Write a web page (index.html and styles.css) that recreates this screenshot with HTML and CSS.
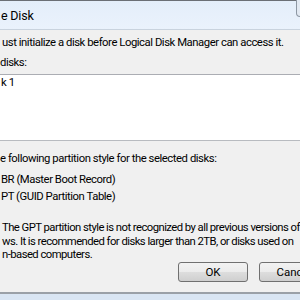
FILE: index.html
```html
<!DOCTYPE html>
<html lang="en">
<head>
  <meta charset="UTF-8" />
  <title>Initialize Disk</title>
  <link rel="stylesheet" href="styles.css">
</head>
<body>

<div class="window">
  <!-- Title bar -->
  <div class="titlebar">
    <span class="title">e Disk</span>
    <div class="close-btn"></div>
  </div>

  <!-- Dialog body -->
  <div class="dialog">
    <p class="intro">ust initialize a disk before Logical Disk Manager can access it.</p>
    <p class="label">disks:</p>
    <div class="listbox">
      <div class="list-item">k 1</div>
    </div>

    <p class="label style-label">e following partition style for the selected disks:</p>
    <div class="option first">BR (Master Boot Record)</div>
    <div class="option">PT (GUID Partition Table)</div>

    <p class="note">The GPT partition style is not recognized by all previous versions of<br>ws. It is recommended for disks larger than 2TB, or disks used on<br>n-based computers.</p>

    <div class="buttons">
      <button class="btn">OK</button>
      <button class="btn">Cancel</button>
    </div>
  </div>

  <div class="frame-bottom"></div>
</div>

</body>
</html>
```

FILE: styles.css
```css
body {
  margin: 0;
  width: 300px;
  height: 300px;
  overflow: hidden;
  font-family: Roboto, "Liberation Sans", sans-serif;
  font-size: 11.3px;
  letter-spacing: -0.45px;
  color: #000;
  background: #f0f0f0;
}

.window {
  display: flex;
  flex-direction: column;
  height: 300px;
  white-space: nowrap;
}

.titlebar {
  position: relative;
  height: 28px;
  border-top: 1px solid #6b6f75;
  border-bottom: 1px solid #c9d3de;
  background: linear-gradient(#e4eefa, #eaf2fc);
  display: flex;
  align-items: center;
  flex: none;
}

.title {
  font-size: 12.5px;
  letter-spacing: -0.2px;
  padding-left: 1px;
}

.close-btn {
  position: absolute;
  right: -20px;
  top: -1px;
  width: 22px;
  height: 16px;
  border: 1px solid #8d97a3;
  border-top: none;
  border-bottom-left-radius: 4px;
  background: #e2e9f2;
}

.dialog {
  flex: 1;
  display: flex;
  flex-direction: column;
  border-bottom: 2px solid #9aa0a7;
}

p {
  margin: 0;
}

.intro {
  margin-top: 5px;
  padding-left: 2px;
  line-height: 16px;
}

.label {
  margin-top: 4px;
  line-height: 16px;
}

.listbox {
  margin-top: 3px;
  height: 65px;
  flex: none;
  background: #fff;
  border-top: 1px solid #abadb3;
  border-bottom: 1px solid #b8bbc0;
}

.list-item {
  line-height: 16px;
  padding-left: 1px;
}

.style-label {
  margin-top: 10px;
}

.option {
  line-height: 17px;
  padding-left: 1px;
}

.option.first {
  margin-top: 4px;
}

.note {
  margin-top: 16px;
  padding-left: 2px;
  line-height: 13.5px;
  letter-spacing: -0.55px;
}

.buttons {
  display: flex;
  gap: 11px;
  margin-top: 0;
  padding-left: 178px;
}

.btn {
  flex: none;
  width: 70px;
  height: 20px;
  padding: 0;
  font-family: inherit;
  font-size: 11.5px;
  letter-spacing: 0;
  border: 1px solid #707070;
  border-radius: 3px;
  background: linear-gradient(#f2f2f2 0%, #ebebeb 50%, #dddddd 51%, #cfcfcf 100%);
  color: #000;
}

.frame-bottom {
  height: 6px;
  flex: none;
  background: #d9e5f3;
}
```
